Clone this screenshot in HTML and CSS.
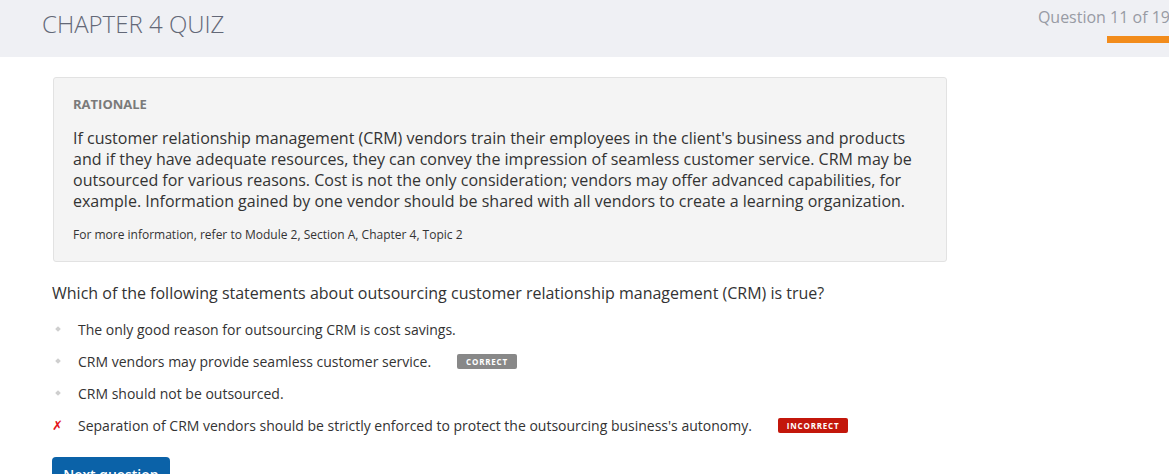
FILE: index.html
```html
<!DOCTYPE html>
<html>
<head>
<meta charset="utf-8">
<link rel="stylesheet" href="styles.css">
</head>
<body>
<header class="top">
  <h1 class="title">CHAPTER 4 QUIZ</h1>
  <div class="progress">
    <div class="count">Question 11 of 19</div>
    <div class="bar"></div>
  </div>
</header>
<main class="content">
  <section class="rationale">
    <h2 class="r-label">RATIONALE</h2>
    <p class="r-text">If customer relationship management (CRM) vendors train their employees in the client's business and products and if they have adequate resources, they can convey the impression of seamless customer service. CRM may be outsourced for various reasons. Cost is not the only consideration; vendors may offer advanced capabilities, for example. Information gained by one vendor should be shared with all vendors to create a learning organization.</p>
    <p class="r-ref">For more information, refer to Module 2, Section A, Chapter 4, Topic 2</p>
  </section>
  <p class="question">Which of the following statements about outsourcing customer relationship management (CRM) is true?</p>
  <ul class="options">
    <li class="opt"><span class="mark"><span class="dot"></span></span><span class="otext">The only good reason for outsourcing CRM is cost savings.</span></li>
    <li class="opt"><span class="mark"><span class="dot"></span></span><span class="otext">CRM vendors may provide seamless customer service.</span><span class="badge correct">CORRECT</span></li>
    <li class="opt"><span class="mark"><span class="dot"></span></span><span class="otext">CRM should not be outsourced.</span></li>
    <li class="opt"><span class="mark x">✗</span><span class="otext">Separation of CRM vendors should be strictly enforced to protect the outsourcing business's autonomy.</span><span class="badge incorrect">INCORRECT</span></li>
  </ul>
  <button class="next">Next question</button>
</main>
</body>
</html>
```

FILE: styles.css
```css
html, body {
  margin: 0;
  padding: 0;
  background: #fff;
  font-family: "Open Sans", "Liberation Sans", sans-serif;
  color: #333;
  overflow: hidden;
}
.top {
  height: 57px;
  background: #eff0f4;
  display: flex;
  justify-content: space-between;
  align-items: flex-start;
}
.title {
  margin: 8px 0 0 42px;
  font-weight: 300;
  font-size: 24px;
  line-height: 32px;
  color: #636877;
}
.progress {
  display: flex;
  flex-direction: column;
  align-items: flex-end;
}
.count {
  margin-top: 6px;
  font-size: 16px;
  line-height: 22px;
  color: #989ba4;
  white-space: nowrap;
  margin-right: -1px;
}
.bar {
  margin-top: 8px;
  width: 62px;
  height: 7px;
  background: #f28c1c;
}
.content {
  padding: 20px 0 0 52px;
}
.rationale {
  width: 854px;
  margin-left: 1px;
  background: #f4f4f4;
  border: 1px solid #e2e2e2;
  border-radius: 3px;
  padding: 16px 19px 18px 19px;
}
.r-label {
  margin: 0;
  font-size: 13px;
  font-weight: 700;
  line-height: 20px;
  color: #7a7a7a;
}
.r-text {
  margin: 14px 0 0 0;
  font-size: 16px;
  line-height: 21px;
  color: #333;
}
.r-ref {
  margin: 15px 0 0 0;
  font-size: 12px;
  line-height: 16px;
  color: #333;
}
.question {
  margin: 20px 0 0 0;
  font-size: 16px;
  line-height: 22px;
  color: #333;
}
.options {
  list-style: none;
  margin: 9px 0 0 0;
  padding: 0;
}
.opt {
  display: flex;
  align-items: center;
  height: 32px;
  font-size: 14px;
  color: #333;
}
.mark {
  width: 26px;
  display: flex;
  align-items: center;
  padding-left: 4px;
  box-sizing: border-box;
}
.dot {
  width: 4px;
  height: 4px;
  background: #cfcfcf;
  transform: rotate(45deg);
}
.x {
  color: #e3151a;
  font-size: 13px;
  font-weight: 700;
  padding-left: 0;
  font-style: italic;
  font-family: "DejaVu Sans", sans-serif;
}
.badge {
  margin-left: 26px;
  color: #fff;
  font-size: 8px;
  font-weight: 700;
  letter-spacing: 0.8px;
  line-height: 15px;
  padding: 0 9px;
  border-radius: 2px;
}
.correct {
  background: #888;
}
.incorrect {
  background: #c3170b;
}
.next {
  margin-top: 16px;
  background: #0b62a8;
  color: #fff;
  border: none;
  border-radius: 4px;
  font-family: "Open Sans", sans-serif;
  font-size: 14px;
  font-weight: 600;
  line-height: 20px;
  padding: 8px 7px 8px;
  width: 118px;
  white-space: nowrap;
}
```
